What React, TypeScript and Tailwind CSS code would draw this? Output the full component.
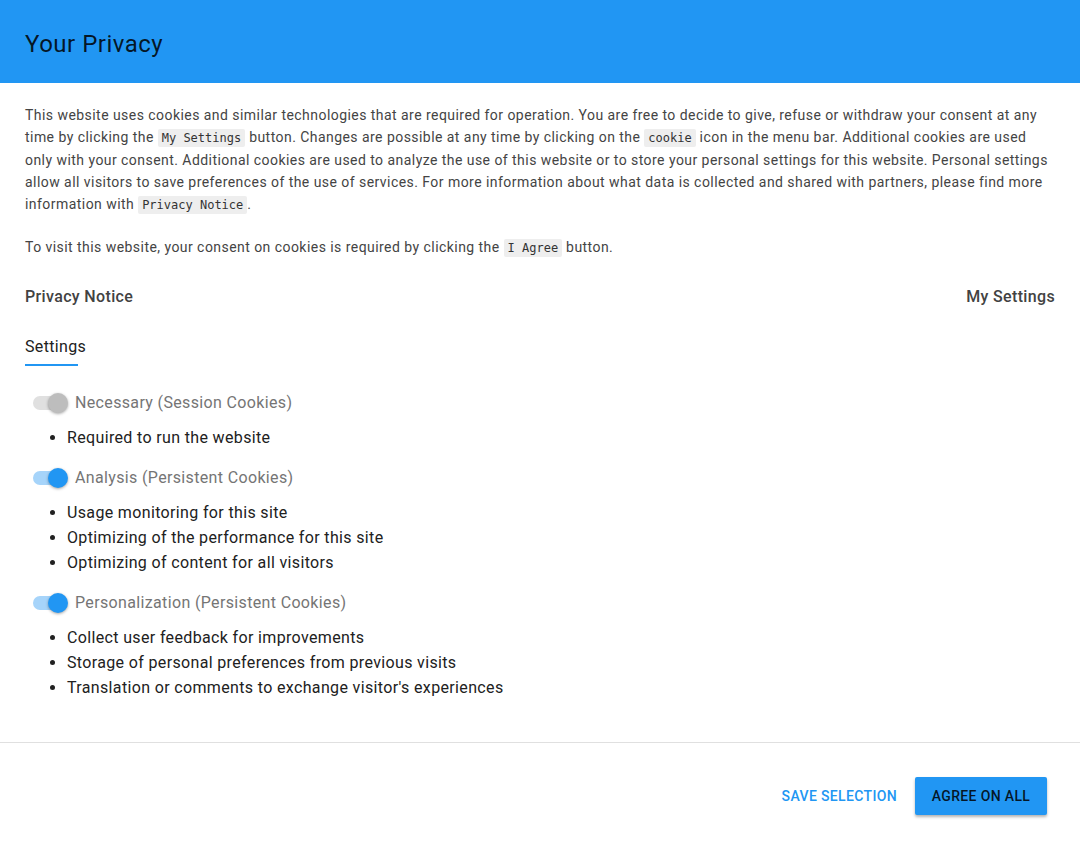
import React from "react";

function Code({ children }: { children: React.ReactNode }) {
  return (
    <code
      className="rounded-[2px] bg-[#eeeeee] px-[4px] py-[2px] text-[12px] tracking-normal text-[#333]"
      style={{ fontFamily: '"DejaVu Sans Mono", "Liberation Mono", monospace' }}
    >
      {children}
    </code>
  );
}

function Toggle({ disabled }: { disabled?: boolean }) {
  return (
    <span className="relative mr-[7px] inline-flex h-[20px] w-[43px] shrink-0 items-center">
      <span
        className={
          "ml-[8px] h-[14px] w-[32px] rounded-full " +
          (disabled ? "bg-[#e0e0e0]" : "bg-[#a6d4fa]")
        }
      />
      <span
        className={
          "absolute left-[23px] top-0 h-[20px] w-[20px] rounded-full shadow-[0_1px_3px_rgba(0,0,0,0.35)] " +
          (disabled ? "bg-[#bdbdbd]" : "bg-[#2196f3]")
        }
      />
    </span>
  );
}

const groups = [
  {
    label: "Necessary (Session Cookies)",
    disabled: true,
    items: ["Required to run the website"],
  },
  {
    label: "Analysis (Persistent Cookies)",
    items: [
      "Usage monitoring for this site",
      "Optimizing of the performance for this site",
      "Optimizing of content for all visitors",
    ],
  },
  {
    label: "Personalization (Persistent Cookies)",
    items: [
      "Collect user feedback for improvements",
      "Storage of personal preferences from previous visits",
      "Translation or comments to exchange visitor's experiences",
    ],
  },
];

export default function App() {
  return (
    <div
      className="flex h-[842px] w-full flex-col overflow-hidden bg-white"
      style={{ fontFamily: 'Roboto, "Liberation Sans", sans-serif' }}
    >
      {/* Header */}
      <header className="flex h-[83px] shrink-0 items-center bg-[#2196f3] px-[25px]">
        <h1 className="pt-[4px] text-[24px] font-normal tracking-[0.5px] text-black/85">Your Privacy</h1>
      </header>

      {/* Content */}
      <main className="flex-1 overflow-hidden px-[25px] pt-[21px]">
        <p className="text-[14px] leading-[22px] tracking-[0.45px] text-[#444]">
          This website uses cookies and similar technologies that are required for operation. You are free to decide to give, refuse or withdraw your consent at any time by clicking the <Code>My Settings</Code> button. Changes are possible at any time by clicking on the <Code>cookie</Code> icon in the menu bar. Additional cookies are used only with your consent. Additional cookies are used to analyze the use of this website or to store your personal settings for this website. Personal settings allow all visitors to save preferences of the use of services. For more information about what data is collected and shared with partners, please find more information with <Code>Privacy Notice</Code>.
        </p>
        <p className="mt-[20px] text-[14px] leading-[22px] tracking-[0.45px] text-[#444]">
          To visit this website, your consent on cookies is required by clicking the <Code>I Agree</Code> button.
        </p>

        <div className="mt-[26px] flex items-center justify-between text-[16px] font-medium leading-[24px] tracking-[0.35px] text-[#424242]">
          <span>Privacy Notice</span>
          <span>My Settings</span>
        </div>

        <div className="mt-[26px] inline-flex flex-col">
          <span className="text-[16px] leading-[24px] tracking-[0.35px] text-[#212121]">Settings</span>
          <span className="mt-[5px] h-[2px] w-[53px] bg-[#2196f3]" />
        </div>

        <div className="mt-[21px]">
          {groups.map((g) => (
            <div key={g.label} className="mb-[12px]">
              <div className="flex h-[32px] items-center">
                <Toggle disabled={g.disabled} />
                <span className="text-[16px] tracking-[0.35px] text-[#757575]">{g.label}</span>
              </div>
              <ul className="mt-[6px] list-disc pl-[42px] text-[16px] leading-[25px] tracking-[0.35px] text-[#212121]">
                {g.items.map((it) => (
                  <li key={it}>{it}</li>
                ))}
              </ul>
            </div>
          ))}
        </div>
      </main>

      {/* Footer */}
      <footer className="flex h-[100px] shrink-0 items-start justify-end gap-[2px] border-t border-[#e0e0e0] pr-[33px] pt-[34px]">
        <button className="h-[38px] px-[16px] text-[14px] font-medium uppercase tracking-[0.35px] text-[#2196f3]">
          Save Selection
        </button>
        <button className="h-[38px] w-[132px] rounded-[2px] bg-[#2196f3] text-[14px] font-medium uppercase tracking-[0.35px] text-black/85 shadow-[0_2px_3px_rgba(0,0,0,0.3)]">
          Agree on all
        </button>
      </footer>
    </div>
  );
}
